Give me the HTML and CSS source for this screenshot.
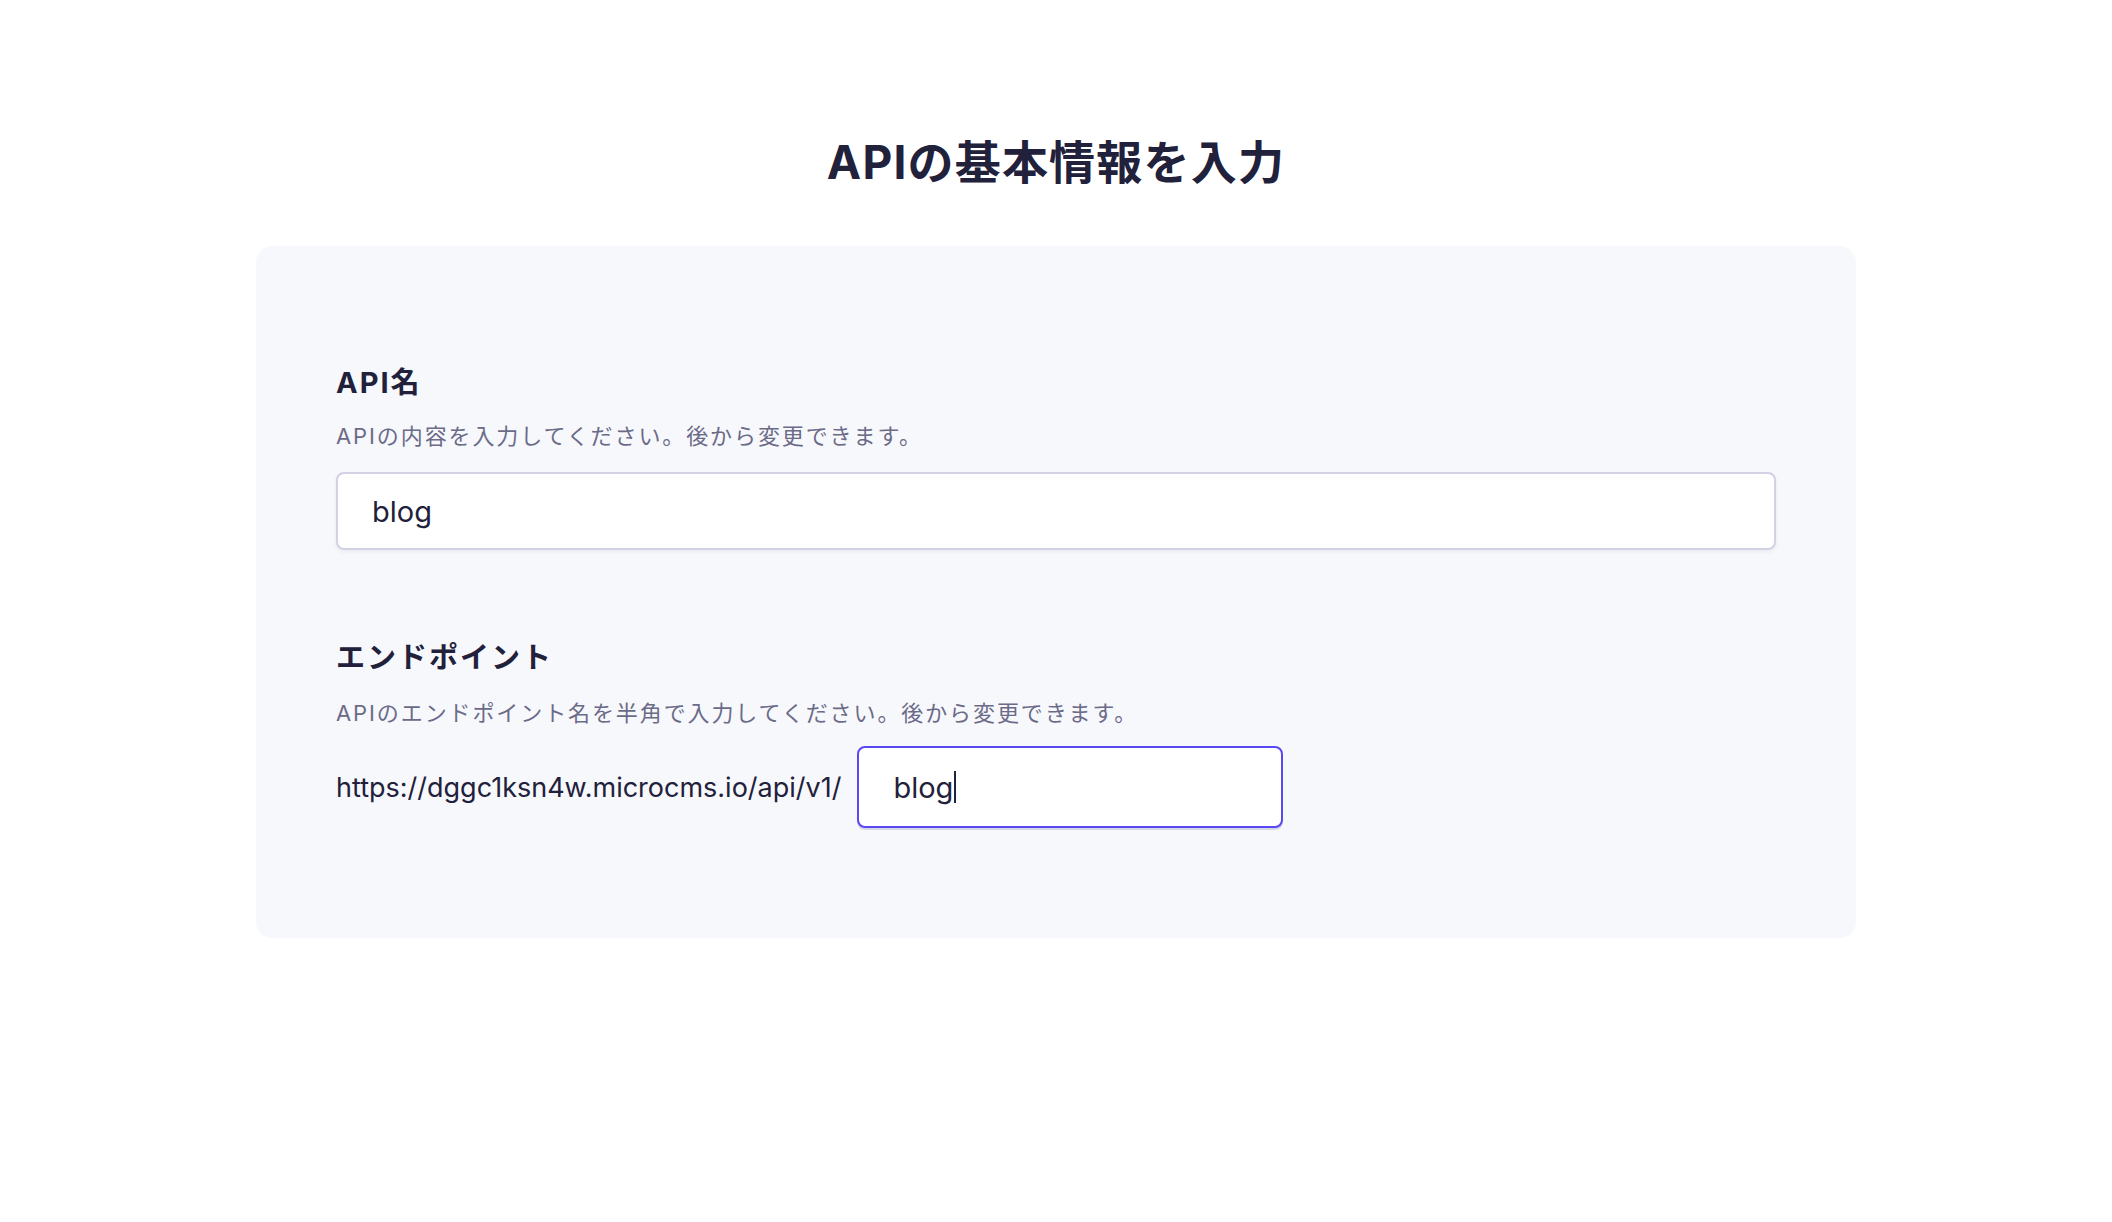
FILE: index.html
```html
<!DOCTYPE html>
<html lang="ja">
<head>
<meta charset="utf-8">
<title>APIの基本情報を入力</title>
<link rel="stylesheet" href="styles.css">
</head>
<body>
<main class="page">
  <h1 class="title">APIの基本情報を入力</h1>
  <div class="card">
    <section class="field">
      <h2 class="label">API名</h2>
      <p class="desc">APIの内容を入力してください。後から変更できます。</p>
      <div class="input input-full"><span class="value">blog</span></div>
    </section>
    <section class="field field-second">
      <h2 class="label">エンドポイント</h2>
      <p class="desc">APIのエンドポイント名を半角で入力してください。後から変更できます。</p>
      <div class="endpoint-row">
        <span class="url">https://dggc1ksn4w.microcms.io/api/v1/</span>
        <div class="input input-focus"><span class="value">blog</span><span class="caret"></span></div>
      </div>
    </section>
  </div>
</main>
</body>
</html>
```

FILE: styles.css
```css
* { box-sizing: border-box; }
body {
  margin: 0;
  background: #ffffff;
  font-family: Inter, "Noto Sans CJK JP", sans-serif;
  color: #21213b;
}
.page {
  padding-top: 126px;
}
.title {
  margin: 0 0 48px;
  text-align: center;
  font-size: 46px;
  line-height: 72px;
  font-weight: 700;
  letter-spacing: 1.2px;
  color: #21213b;
}
.card {
  width: 1600px;
  margin: 0 auto;
  background: #f7f8fc;
  border-radius: 16px;
  padding: 114px 80px 110px;
}
.field-second {
  margin-top: 85px;
}
.label {
  margin: 0;
  font-size: 29px;
  line-height: 45px;
  font-weight: 700;
  letter-spacing: 2px;
  color: #21213b;
}
.desc {
  margin: 15px 0 0;
  font-size: 22px;
  line-height: 33px;
  letter-spacing: 1.9px;
  color: #6b6b88;
}
.field-second .desc {
  margin-top: 17px;
}
.input {
  display: flex;
  align-items: center;
  background: #ffffff;
  border: 2px solid #d2d2e4;
  border-radius: 8px;
  box-shadow: 0 2px 4px rgba(40, 40, 90, 0.06);
  padding: 0 34px;
  font-size: 29px;
  color: #21213b;
}
.input-full {
  margin-top: 19px;
  height: 78px;
}
.endpoint-row {
  margin-top: 16px;
  display: flex;
  align-items: center;
  gap: 16px;
}
.url {
  font-size: 27px;
  color: #21213b;
}
.input-focus {
  width: 426px;
  height: 82px;
  border-color: #5a48f5;
  box-shadow: 0 2px 0 #d6d6e2;
}
.caret {
  display: inline-block;
  width: 2px;
  height: 32px;
  background: #21213b;
  margin-left: 1px;
}
```
